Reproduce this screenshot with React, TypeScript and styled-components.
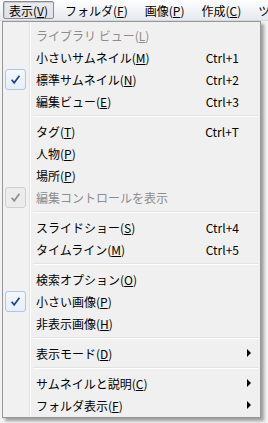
import styled, { createGlobalStyle } from "styled-components";

const GlobalStyle = createGlobalStyle`
  body {
    margin: 0;
    background: #eef0f2;
    font-family: "Noto Sans CJK JP", "Noto Sans", sans-serif;
  }
`;

const Screen = styled.div`
  position: relative;
  width: 268px;
  height: 423px;
  overflow: hidden;
  background: #f3f3f3;
`;

const MenuBar = styled.div`
  display: flex;
  align-items: center;
  height: 21px;
  padding-left: 3px;
  background: linear-gradient(#ffffff, #f1f3f6 50%, #e6e9ee);
  border-bottom: 1px solid #d6d9de;
  box-sizing: border-box;
  overflow: hidden;
`;

const BarItem = styled.div<{ $open?: boolean }>`
  flex-shrink: 0;
  height: 18px;
  line-height: 17px;
  padding: 0 5px;
  margin-right: 5px;
  font-size: 12px;
  color: #000;
  white-space: nowrap;
  box-sizing: border-box;
  border: 1px solid ${(p) => (p.$open ? "#8a8c8f" : "transparent")};
  border-radius: 2px;
  background: ${(p) =>
    p.$open ? "linear-gradient(#e9ebee, #dfe2e6)" : "transparent"};
  box-shadow: ${(p) => (p.$open ? "inset 1px 1px 0 #c9ccd1" : "none")};
`;

const Popup = styled.div`
  position: absolute;
  left: 2px;
  top: 21px;
  width: 259px;
  box-sizing: border-box;
  padding: 2px 2px 1px;
  border: 1px solid #979797;
  background: linear-gradient(
    to right,
    #f1f1f1 0 26px,
    #e2e3e3 26px 27px,
    #ffffff 27px 28px,
    #f0f0f0 28px
  );
  box-shadow: 3px 3px 3px rgba(0, 0, 0, 0.35);
`;

const Item = styled.div<{ $disabled?: boolean }>`
  display: grid;
  grid-template-columns: 31px 1fr auto 19px;
  align-items: center;
  height: 22px;
  font-size: 12px;
  color: ${(p) => (p.$disabled ? "#8d8d8d" : "#000")};
  white-space: nowrap;
`;

const CheckBox = styled.div<{ $disabled?: boolean }>`
  width: 21px;
  height: 21px;
  box-sizing: border-box;
  display: flex;
  align-items: center;
  justify-content: center;
  border: 1px solid ${(p) => (p.$disabled ? "#cfcfcf" : "#a9c6ec")};
  border-radius: 3px;
  background: ${(p) =>
    p.$disabled ? "#ececec" : "linear-gradient(#f4f8fe, #e6eefb)"};
`;

const Label = styled.span``;

const Shortcut = styled.span`
  text-align: right;
`;

const Arrow = styled.span`
  justify-self: center;
  width: 0;
  height: 0;
  border-top: 4px solid transparent;
  border-bottom: 4px solid transparent;
  border-left: 4px solid #000;
`;

const Separator = styled.div`
  height: 8px;
  margin-left: 28px;
  display: flex;
  flex-direction: column;
  justify-content: center;
  &::before {
    content: "";
    height: 1px;
    background: #e2e3e3;
  }
  &::after {
    content: "";
    height: 1px;
    background: #ffffff;
  }
`;

type Entry =
  | { sep: true }
  | {
      sep?: false;
      text: string;
      key?: string;
      shortcut?: string;
      checked?: boolean;
      disabled?: boolean;
      sub?: boolean;
    };

const entries: Entry[] = [
  { text: "ライブラリ ビュー", key: "L", disabled: true },
  { text: "小さいサムネイル", key: "M", shortcut: "Ctrl+1" },
  { text: "標準サムネイル", key: "N", shortcut: "Ctrl+2", checked: true },
  { text: "編集ビュー", key: "E", shortcut: "Ctrl+3" },
  { sep: true },
  { text: "タグ", key: "T", shortcut: "Ctrl+T" },
  { text: "人物", key: "P" },
  { text: "場所", key: "P" },
  { text: "編集コントロールを表示", checked: true, disabled: true },
  { sep: true },
  { text: "スライドショー", key: "S", shortcut: "Ctrl+4" },
  { text: "タイムライン", key: "M", shortcut: "Ctrl+5" },
  { sep: true },
  { text: "検索オプション", key: "O" },
  { text: "小さい画像", key: "P", checked: true },
  { text: "非表示画像", key: "H" },
  { sep: true },
  { text: "表示モード", key: "D", sub: true },
  { sep: true },
  { text: "サムネイルと説明", key: "C", sub: true },
  { text: "フォルダ表示", key: "F", sub: true },
];

const Check = ({ disabled }: { disabled?: boolean }) => (
  <CheckBox $disabled={disabled}>
    <svg width="11" height="11" viewBox="0 0 10 10">
      <path
        d="M1.5 5.2 L3.8 8 L8.6 1.5"
        fill="none"
        stroke={disabled ? "#8d8d8d" : "#1d3f91"}
        strokeWidth="1.5"
      />
    </svg>
  </CheckBox>
);

const App = (): JSX.Element => {
  return (
    <Screen>
      <GlobalStyle />
      <MenuBar>
        <BarItem $open>
          表示(<u>V</u>)
        </BarItem>
        <BarItem>
          フォルダ(<u>F</u>)
        </BarItem>
        <BarItem>
          画像(<u>P</u>)
        </BarItem>
        <BarItem>
          作成(<u>C</u>)
        </BarItem>
        <BarItem>ツ</BarItem>
      </MenuBar>
      <Popup>
        {entries.map((e, i) => {
          if (e.sep) return <Separator key={i} />;
          return (
            <Item key={i} $disabled={e.disabled}>
              <span>{e.checked && <Check disabled={e.disabled} />}</span>
              <Label>
                {e.text}
                {e.key && (
                  <>
                    (<u>{e.key}</u>)
                  </>
                )}
              </Label>
              <Shortcut>{e.shortcut}</Shortcut>
              {e.sub ? <Arrow /> : <span />}
            </Item>
          );
        })}
      </Popup>
    </Screen>
  );
};

export default App;
